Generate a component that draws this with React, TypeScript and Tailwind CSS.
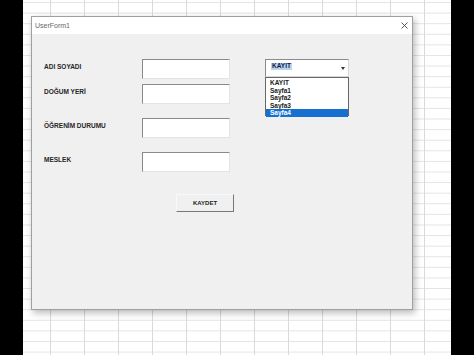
const fields = [
  { label: "ADI SOYADI", gap: "mt-0" },
  { label: "DOĞUM YERİ", gap: "mt-[5px]" },
  { label: "ÖĞRENİM DURUMU", gap: "mt-[14px]" },
  { label: "MESLEK", gap: "mt-[14px]" },
];

const sheets = ["KAYIT", "Sayfa1", "Sayfa2", "Sayfa3", "Sayfa4"];

function TextBox() {
  return (
    <div className="w-[88px] h-[20px] bg-white border border-t-[#8a8a8a] border-l-[#8a8a8a] border-b-[#e3e3e3] border-r-[#e3e3e3]" />
  );
}

export default function App() {
  return (
    <div className="w-[474px] h-[355px] bg-black flex font-['Liberation_Sans',Arial,sans-serif]">
      <div className="ml-[23px] w-[428px] h-full bg-white bg-[image:linear-gradient(to_right,#dadada_1px,transparent_1px),linear-gradient(to_bottom,#e4e4e4_1px,transparent_1px)] bg-[size:34px_10.6px] bg-[position:27px_2px] pt-[16px] pl-[8px]">
        <div className="w-[382px] h-[294px] border border-[#a0a0a0] bg-[#f0f0f0] shadow-[2px_3px_7px_rgba(0,0,0,0.28)] flex flex-col">
          <div className="h-[17px] bg-white flex items-center justify-between pl-[3px] pr-[4px] shrink-0">
            <span className="text-[7px] text-[#666] leading-none">UserForm1</span>
            <svg width="7" height="7" viewBox="0 0 7 7" className="text-[#444]">
              <path d="M0.5 0.5L6.5 6.5M6.5 0.5L0.5 6.5" stroke="currentColor" strokeWidth="0.9" />
            </svg>
          </div>
          <div className="flex pl-[12px] pt-[25px]">
            <div className="flex flex-col w-[186px] shrink-0">
              {fields.map((f) => (
                <div key={f.label} className={`flex items-center ${f.gap}`}>
                  <span className="w-[98px] shrink-0 pb-[3px] text-[6.5px] font-bold text-[#262626] leading-none whitespace-nowrap">
                    {f.label}
                  </span>
                  <TextBox />
                </div>
              ))}
              <div className="mt-[22px] ml-[132px] w-[58px] h-[18px] bg-[#f0f0f0] border border-t-[#f8f8f8] border-l-[#f8f8f8] border-b-[#777] border-r-[#777] flex items-center justify-center">
                <span className="text-[6px] font-bold text-[#222] leading-none">KAYDET</span>
              </div>
            </div>
            <div className="ml-[35px] flex flex-col w-[84px]">
              <div className="h-[18px] bg-white border border-t-[#8a8a8a] border-l-[#8a8a8a] border-b-[#d8d8d8] border-r-[#d8d8d8] flex items-center justify-between pl-[5px] pr-[3px]">
                <span className="bg-[#bcd3ec] text-[#0d2148] text-[6.5px] font-bold leading-[6px] px-[1px] pb-[1px] mb-[4px]">
                  KAYIT
                </span>
                <svg width="4" height="3" viewBox="0 0 4 3">
                  <path d="M0 0H4L2 3Z" fill="#333" />
                </svg>
              </div>
              <div className="h-[39px] bg-white border border-[#666] flex flex-col pt-[1px]">
                {sheets.map((s, i) => (
                  <div
                    key={s}
                    className={`h-[7.6px] leading-[7.6px] text-[6.5px] font-bold pl-[4px] ${
                      i === 4 ? "bg-[#1570cf] text-white" : "text-[#222]"
                    }`}
                  >
                    {s}
                  </div>
                ))}
              </div>
            </div>
          </div>
        </div>
      </div>
    </div>
  );
}
